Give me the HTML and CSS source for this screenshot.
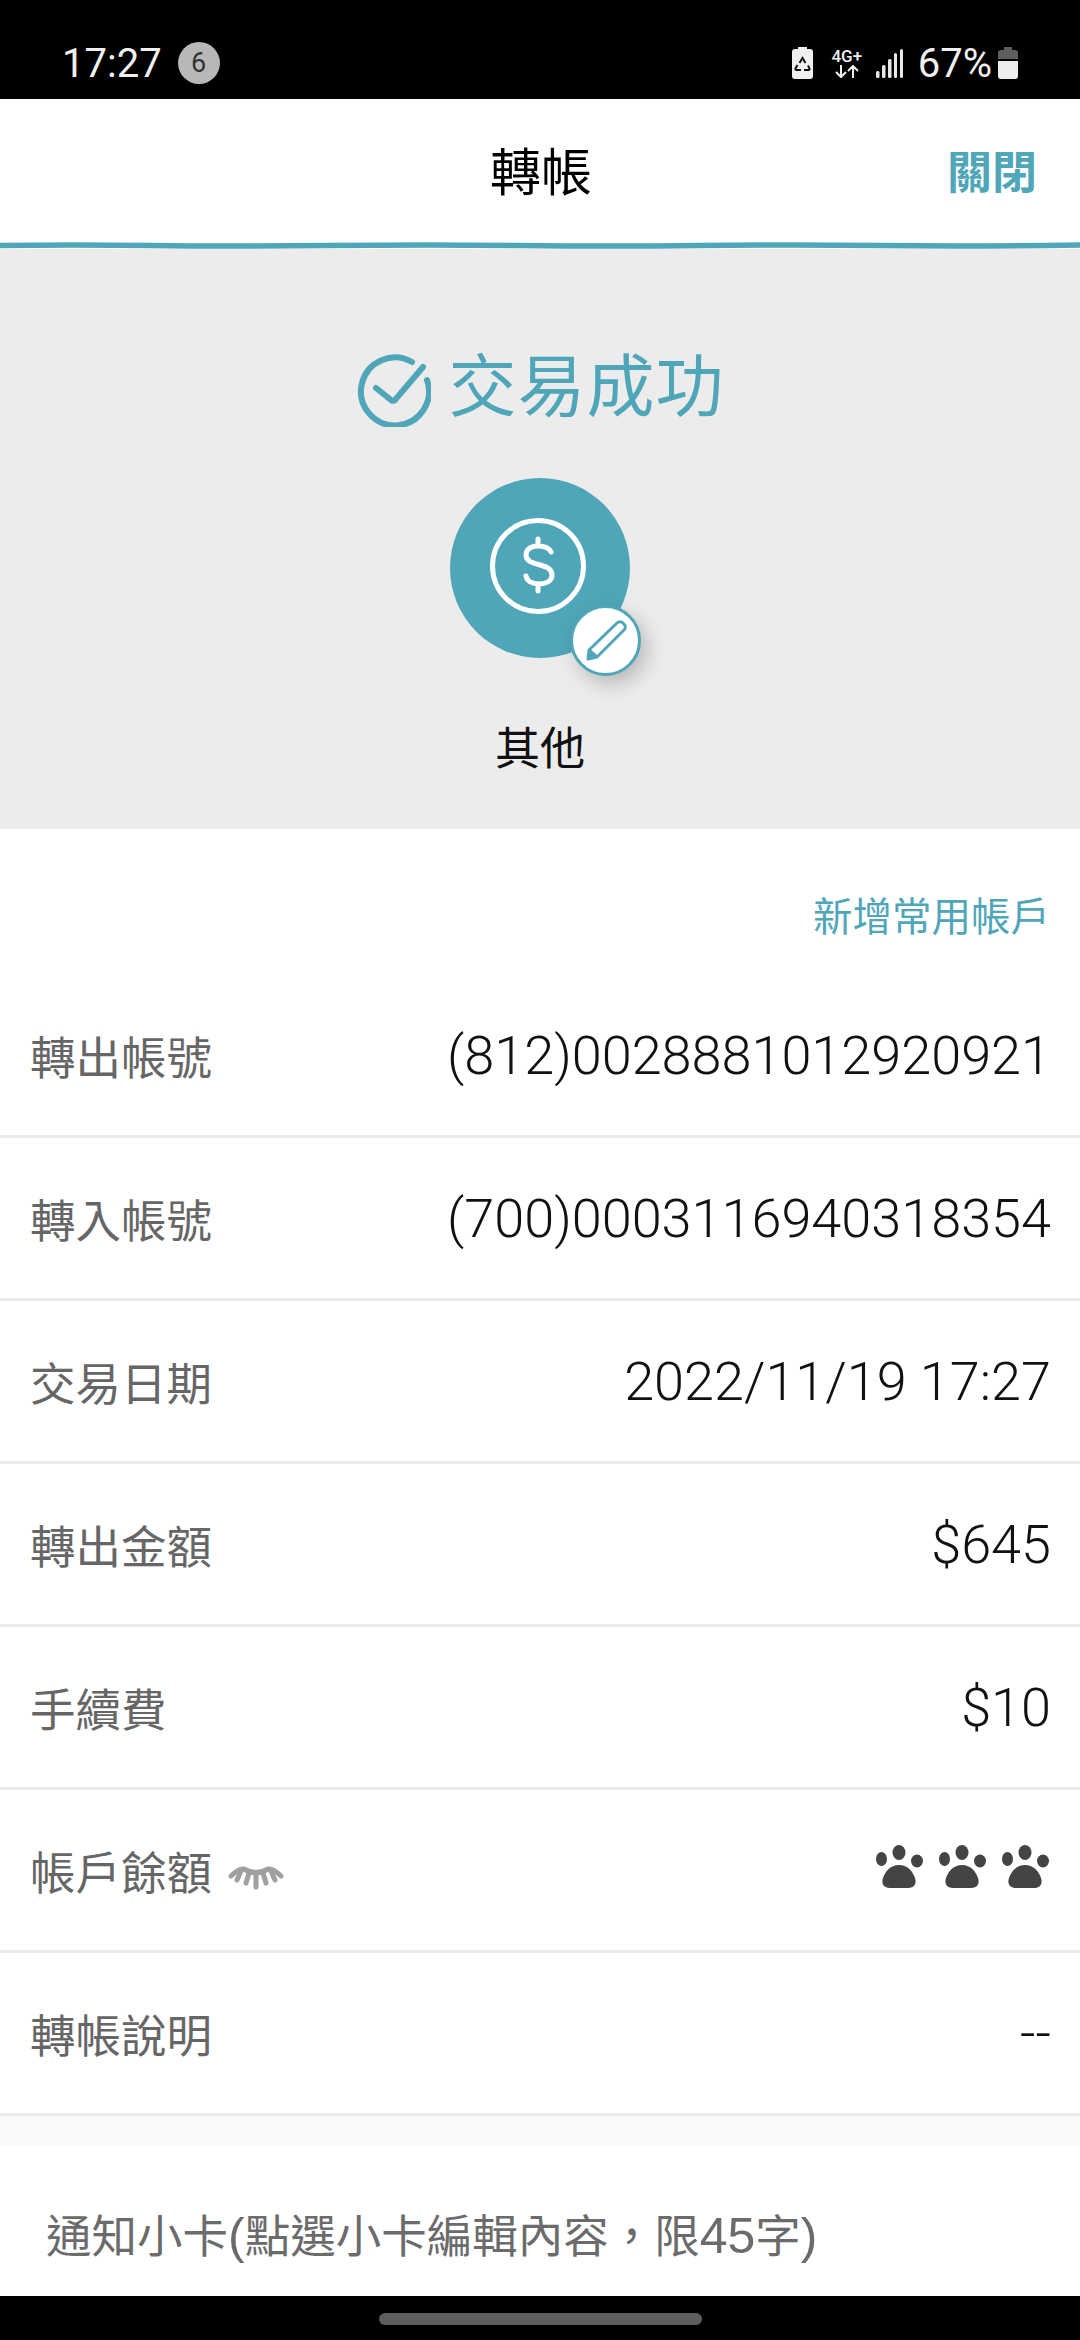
FILE: index.html
```html
<!DOCTYPE html>
<html lang="zh-Hant">
<head>
  <meta charset="UTF-8">
  <meta name="viewport" content="width=device-width, initial-scale=1.0">
  <title>轉帳</title>
  <link rel="stylesheet" href="styles.css">
</head>
<body>
  <div class="status-bar">
    <div class="status-left">
      <span class="clock">17:27</span>
      <span class="notif-count">6</span>
    </div>
    <div class="status-right">
      <svg class="icon-saver" width="21" height="32" viewBox="0 0 21 32">
        <path d="M6 0h9v2h3a3 3 0 0 1 3 3v24a3 3 0 0 1-3 3H3a3 3 0 0 1-3-3V5a3 3 0 0 1 3-3h3z" fill="#f0f0f0"/>
        <path d="M7.500 16l3-5 3 5M16 18.500l1.500 3a1 1 0 0 1-1 1.500H12M9 23H4.500a1 1 0 0 1-1-1.500l2-3.500" fill="none" stroke="#111" stroke-width="2"/>
      </svg>
      <div class="net-type">
        <span class="net-label">4G+</span>
        <svg width="26" height="13" viewBox="0 0 26 13">
          <path d="M7 0v11M2 7l5 5 5-5M19 13V2M14 6l5-5 5 5" fill="none" stroke="#f0f0f0" stroke-width="2"/>
        </svg>
      </div>
      <svg class="icon-signal" width="27" height="29" viewBox="0 0 27 29">
        <rect x="0" y="22" width="3.500" height="7" rx="1.500" fill="#e8e8e8"/>
        <rect x="6" y="16" width="3.500" height="13" rx="1.500" fill="#e8e8e8"/>
        <rect x="12" y="10" width="3.500" height="19" rx="1.500" fill="#e8e8e8"/>
        <rect x="18" y="4" width="3" height="25" rx="1.500" fill="#e8e8e8"/>
        <rect x="24" y="0" width="3" height="29" rx="1.500" fill="#e8e8e8"/>
      </svg>
      <span class="battery-text">67%</span>
      <svg class="icon-battery" width="20" height="32" viewBox="0 0 20 32">
        <path d="M6 0h8v3h3a3 3 0 0 1 3 3v6H0V6a3 3 0 0 1 3-3h3z" fill="#5e5e5e"/>
        <path d="M0 14h20v15a3 3 0 0 1-3 3H3a3 3 0 0 1-3-3z" fill="#eeeeee"/>
      </svg>
    </div>
  </div>

  <header class="top-bar">
    <span class="top-spacer"></span>
    <h1 class="top-title">轉帳</h1>
    <a class="top-close">關閉</a>
  </header>
  <svg class="wave" width="1080" height="7" viewBox="0 0 1080 7">
    <path d="M0 3.500Q70 2.500 150 3.500T330 3.500T520 3.500T700 3.500T880 3.500T1080 3" fill="none" stroke="#4fa6b8" stroke-width="5.500"/>
  </svg>

  <section class="result">
    <div class="result-head">
      <svg width="74" height="74" viewBox="0 0 74 74">
        <path d="M70 27A34 34 0 1 1 55 9" fill="none" stroke="#4fa6b8" stroke-width="6" stroke-linecap="round"/>
        <path d="M19 35l15 12a3 3 0 0 0 4 0L66 14" fill="none" stroke="#4fa6b8" stroke-width="6" stroke-linecap="round"/>
      </svg>
      <span class="result-text">交易成功</span>
    </div>
    <div class="category">
      <svg width="180" height="180" viewBox="0 0 180 180">
        <circle cx="90" cy="90" r="90" fill="#4fa6b8"/>
        <circle cx="88" cy="88" r="45.500" fill="none" stroke="#fff" stroke-width="5"/>
        <path d="M101 74c-2-4-7-6-13-6-7 0-12 3-12 9 0 12 26 7 26 20 0 6-6 9-13 9-7 0-12-3-13-8M88 61v7M88 106v7" fill="none" stroke="#fff" stroke-width="5" stroke-linecap="round"/>
      </svg>
      <span class="edit-badge">
        <svg width="46" height="46" viewBox="0 0 46 46">
          <path d="M5 41l1-9L34 5a4 4 0 0 1 6 0l1 1a4 4 0 0 1 0 6L14 39zM6 32l8 7" fill="none" stroke="#4fa6b8" stroke-width="3" stroke-linejoin="round"/>
          <path d="M5 41l1-9 8 7z" fill="#4fa6b8"/>
        </svg>
      </span>
    </div>
    <div class="category-name">其他</div>
  </section>

  <div class="link-row"><a class="add-link">新增常用帳戶</a></div>

  <div class="detail-row">
    <span class="detail-label">轉出帳號</span>
    <span class="detail-value">(812)0028881012920921</span>
  </div>
  <div class="detail-row">
    <span class="detail-label">轉入帳號</span>
    <span class="detail-value">(700)0003116940318354</span>
  </div>
  <div class="detail-row">
    <span class="detail-label">交易日期</span>
    <span class="detail-value">2022/11/19 17:27</span>
  </div>
  <div class="detail-row">
    <span class="detail-label">轉出金額</span>
    <span class="detail-value">$645</span>
  </div>
  <div class="detail-row">
    <span class="detail-label">手續費</span>
    <span class="detail-value">$10</span>
  </div>
  <div class="detail-row">
    <span class="detail-label">
      帳戶餘額
      <svg class="eye" width="56" height="25" viewBox="0 0 56 25">
        <path d="M3 11Q11 3 16 4Q28 11 40 4Q45 3 53 11M13 6l-4 9M21 8l-3 10M35 8l3 10M43 6l4 9M28 9v13" fill="none" stroke="#a0a0a0" stroke-width="5" stroke-linecap="round"/>
      </svg>
    </span>
    <span class="paws">
      <svg width="47" height="43" viewBox="0 0 47 43"><use href="#paw"/></svg>
      <svg width="47" height="43" viewBox="0 0 47 43"><use href="#paw"/></svg>
      <svg width="47" height="43" viewBox="0 0 47 43"><use href="#paw"/></svg>
    </span>
  </div>
  <div class="detail-row">
    <span class="detail-label">轉帳說明</span>
    <span class="detail-value">--</span>
  </div>

  <div class="band"></div>

  <div class="card-title">通知小卡<span class="latin">(</span>點選小卡編輯內容&#xFF0C;限<span class="latin">45</span>字<span class="latin">)</span></div>

  <div class="nav-bar"><span class="home-pill"></span></div>

  <svg class="defs" width="0" height="0">
    <defs>
      <g id="paw" fill="#444">
        <ellipse cx="5.500" cy="14" rx="5.500" ry="7"/>
        <ellipse cx="23" cy="7.500" rx="6.500" ry="7.500"/>
        <ellipse cx="41" cy="16" rx="6" ry="6.500"/>
        <path d="M23 20c9 0 14 7 16 13 2 6-1 10-7 10H14c-6 0-9-4-7-10 2-6 7-13 16-13z"/>
      </g>
    </defs>
  </svg>
</body>
</html>
```

FILE: styles.css
```css
* {
  margin: 0;
  padding: 0;
  box-sizing: border-box;
}

body {
  width: 1080px;
  height: 2340px;
  overflow: hidden;
  background-color: #fff;
  font-family: "Noto Sans CJK TC", Roboto, sans-serif;
}

.status-bar {
  height: 99px;
  background-color: #000;
  color: #f0f0f0;
  display: flex;
  justify-content: space-between;
  align-items: center;
  padding: 27px 62px 0 62px;
  font-family: Roboto, sans-serif;
  font-weight: 400;
  font-size: 40px;
}

.status-left {
  display: flex;
  align-items: center;
  gap: 16px;
}

.notif-count {
  width: 42px;
  height: 42px;
  border-radius: 50%;
  background-color: #b8b8b8;
  color: #333;
  font-size: 27px;
  font-weight: 400;
  display: flex;
  align-items: center;
  justify-content: center;
}

.status-right {
  display: flex;
  align-items: center;
}

.net-type {
  margin-left: 18px;
  width: 32px;
  display: flex;
  flex-direction: column;
  align-items: center;
}

.net-label {
  font-size: 17px;
  font-weight: 500;
  line-height: 17px;
}

.icon-signal {
  margin-left: 13px;
}

.battery-text {
  margin-left: 15px;
}

.icon-battery {
  margin-left: 6px;
}

.top-bar {
  height: 143px;
  display: grid;
  grid-template-columns: 1fr auto 1fr;
  align-items: center;
  padding: 0 43px 0 45px;
}

.top-title {
  font-size: 51px;
  font-weight: 400;
  color: #000;
  margin-top: -4px;
}

.top-close {
  justify-self: end;
  font-size: 45px;
  font-weight: 700;
  color: #4fa6b8;
  margin-top: -2px;
}

.wave {
  display: block;
}

.result {
  height: 580px;
  background-color: #ececec;
  display: flex;
  flex-direction: column;
  align-items: center;
  padding-top: 96px;
}

.result-head {
  height: 90px;
  display: flex;
  align-items: center;
  gap: 17px;
  padding-left: 2px;
}

.result-text {
  font-size: 68px;
  line-height: 76px;
  color: #4fa6b8;
  letter-spacing: 1px;
  margin-top: -17px;
}

.category {
  position: relative;
  width: 180px;
  height: 180px;
  margin-top: 43px;
}

.category svg {
  display: block;
}

.edit-badge {
  position: absolute;
  left: 120px;
  top: 127px;
  width: 71px;
  height: 71px;
  border-radius: 50%;
  background-color: #fff;
  border: 3px solid #4fa6b8;
  box-shadow: 6px 8px 20px rgba(0, 0, 0, 0.22);
  display: flex;
  align-items: center;
  justify-content: center;
}

.category-name {
  margin-top: 58px;
  font-size: 45px;
  line-height: 60px;
  color: #111;
}

.link-row {
  height: 146px;
  display: flex;
  justify-content: flex-end;
  padding: 60px 30px 0 0;
}

.add-link {
  font-size: 39.5px;
  line-height: 50px;
  color: #4fa6b8;
}

.detail-row {
  height: 163px;
  display: flex;
  justify-content: space-between;
  align-items: center;
  padding: 0 29px 0 30px;
  border-bottom: 3px solid #ebebeb;
}

.detail-label {
  font-size: 45.5px;
  color: #666;
  display: flex;
  align-items: center;
  gap: 16px;
}

.eye {
  margin-top: 14px;
}

.detail-value {
  font-family: Roboto, sans-serif;
  font-weight: 300;
  font-size: 54px;
  color: #111;
}

.paws {
  display: flex;
  gap: 16px;
  padding-right: 2px;
  margin-top: -8px;
}

.band {
  height: 30px;
  background-color: #f9f9f9;
}

.card-title {
  height: 150px;
  padding: 59px 0 0 46px;
  font-size: 45.5px;
  line-height: 56px;
  color: #6b6b6b;
  font-family: "Noto Sans CJK TC", sans-serif;
}

.latin {
  font-family: "Liberation Sans", sans-serif;
  font-size: 50px;
}

.nav-bar {
  height: 45px;
  background-color: #000;
  display: flex;
  justify-content: center;
  padding-top: 17px;
}

.home-pill {
  width: 323px;
  height: 12px;
  border-radius: 6px;
  background-color: #5e5e5e;
}

.defs {
  position: absolute;
}
```
